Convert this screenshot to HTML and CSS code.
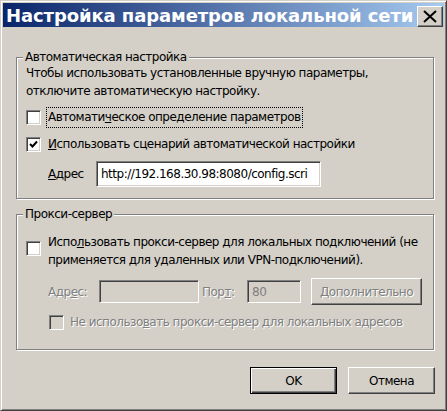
FILE: index.html
```html
<!DOCTYPE html>
<html lang="ru">
<head>
<meta charset="utf-8">
<title>Настройка параметров локальной сети</title>
<link rel="stylesheet" href="styles.css">
</head>
<body>
<div class="window">
  <div class="titlebar">
    <span class="title">Настройка параметров локальной сети</span>
    <span class="close">
      <svg width="14" height="13" viewBox="0 0 14 13"><path d="M1 1 L13 12 M13 1 L1 12" stroke="#000" stroke-width="2" fill="none"/></svg>
    </span>
  </div>
  <div class="content">
    <div class="group g1">
      <div class="group-title">Автоматическая настройка</div>
      <p class="note">Чтобы использовать установленные вручную параметры,<br>отключите автоматическую настройку.</p>
      <div class="check-row r1">
        <span class="cb"></span>
        <span class="lbl focus">Автомати<u>ч</u>еское определение параметров</span>
      </div>
      <div class="check-row r2">
        <span class="cb"><svg width="9" height="9" viewBox="0 0 9 9"><path d="M1 4 L3.5 6.5 L8 1.5" stroke="#000" stroke-width="2" fill="none"/></svg></span>
        <span class="lbl"><u>И</u>спользовать сценарий автоматической настройки</span>
      </div>
      <div class="addr-row">
        <span class="addr-lbl"><u>А</u>дрес</span>
        <span class="input url">http://192.168.30.98:8080/config.scri</span>
      </div>
    </div>
    <div class="group g2">
      <div class="group-title">Прокси-сервер</div>
      <div class="check-row r3">
        <span class="cb"></span>
        <span class="lbl two">Испо<u>л</u>ьзовать прокси-сервер для локальных подключений (не<br>применяется для удаленных или VPN-подключений).</span>
      </div>
      <div class="proxy-row">
        <span class="dis p-addr-lbl">Адр<u>е</u>с:</span>
        <span class="input disabled p-addr"></span>
        <span class="dis p-port-lbl">Пор<u>т</u>:</span>
        <span class="input disabled p-port"><span class="dis-val">80</span></span>
        <span class="btn adv"><span class="dis"><u>Д</u>ополнительно</span></span>
      </div>
      <div class="check-row r4">
        <span class="cb disabled-cb"></span>
        <span class="dis lbl-dis">Не использо<u>в</u>ать прокси-сервер для локальных адресов</span>
      </div>
    </div>
    <div class="buttons">
      <span class="btn default">OK</span>
      <span class="btn">Отмена</span>
    </div>
  </div>
</div>
</body>
</html>
```
FILE: styles.css
```css
* { box-sizing: border-box; }
html, body { margin: 0; padding: 0; }
body {
  width: 447px;
  height: 411px;
  overflow: hidden;
  background: #d4d0c8;
  font-family: "DejaVu Sans", sans-serif;
  font-size: 12px;
  letter-spacing: -0.5px;
  color: #000;
}
u { text-decoration: underline; text-underline-offset: 1px; }

.window {
  width: 447px;
  height: 411px;
  background: #d4d0c8;
  border: 1px solid;
  border-color: #d4d0c8 #404040 #404040 #d4d0c8;
  box-shadow: inset 1px 1px #fff, inset -1px -1px #808080;
  padding: 2px;
  display: flex;
  flex-direction: column;
}

.titlebar {
  height: 24px;
  display: flex;
  align-items: center;
  padding-left: 3px;
  background: linear-gradient(to right, #0a246a, #a6caf0);
}
.title {
  flex: 1;
  color: #fff;
  font-weight: bold;
  font-size: 18px;
  letter-spacing: -0.1px;
  white-space: nowrap;
  overflow: hidden;
}
.close {
  width: 26px;
  height: 21px;
  margin-right: 1px;
  margin-top: 2px;
  background: #d4d0c8;
  border: 1px solid;
  border-color: #fff #404040 #404040 #fff;
  box-shadow: inset -1px -1px #808080;
  display: flex;
  align-items: center;
  justify-content: center;
}

.content {
  display: flex;
  flex-direction: column;
  padding: 0 9px 0 13px;
}

.group {
  border: 1px solid #808080;
  box-shadow: inset 1px 1px #fff, 1px 1px #fff;
  margin-right: 1px;
  padding: 0 9px;
  display: flex;
  flex-direction: column;
}
.g1 { margin-top: 30px; padding-bottom: 11px; }
.g2 { margin-top: 15px; padding-bottom: 19px; }

.group-title {
  margin-top: -8px;
  margin-left: -3px;
  line-height: 14px;
  height: 14px;
  padding: 0 2px;
  background: #d4d0c8;
  align-self: flex-start;
  white-space: nowrap;
}

.note {
  margin: 0;
  line-height: 18px;
  white-space: nowrap;
}

.check-row {
  display: flex;
  align-items: center;
}
.r1 { margin-top: 6px; height: 22px; }
.r2 { margin-top: 5px; height: 22px; }
.r3 { margin-top: 11px; align-items: flex-start; }
.r4 { margin-top: 10px; height: 15px; padding-left: 23px; }

.cb {
  width: 15px;
  height: 15px;
  flex: none;
  background: #fff;
  border: 1px solid;
  border-color: #808080 #fff #fff #808080;
  box-shadow: inset 1px 1px #404040, inset -1px -1px #d4d0c8;
  display: flex;
  align-items: center;
  justify-content: center;
}
.r3 .cb { margin-top: 9px; }
.disabled-cb { background: #d4d0c8; }

.lbl {
  margin-left: 5px;
  padding: 0 1px;
  line-height: 18px;
  border: 1px solid transparent;
  white-space: nowrap;
}
.lbl.focus { border: 1px dotted #000; line-height: 19px; }
.lbl.two { line-height: 18px; }

.addr-row {
  margin-top: 6px;
  display: flex;
  align-items: center;
}
.addr-lbl { margin-left: 22px; width: 48px; }

.input {
  display: flex;
  align-items: center;
  background: #fff;
  border: 1px solid;
  border-color: #808080 #fff #fff #808080;
  box-shadow: inset 1px 1px #404040, inset -1px -1px #d4d0c8;
  white-space: nowrap;
  overflow: hidden;
}
.url { width: 225px; height: 26px; padding-left: 4px; }
.input.disabled { background: #d4d0c8; height: 23px; }

.proxy-row {
  margin-top: 8px;
  height: 27px;
  display: flex;
  align-items: center;
}
.dis { color: #808080; text-shadow: 1px 1px 0 #fff; white-space: nowrap; }
.p-addr-lbl { margin-left: 22px; width: 51px; }
.p-addr { width: 100px; }
.p-port-lbl { margin-left: 3px; width: 45px; }
.p-port { width: 54px; padding-left: 4px; }
.dis-val { color: #808080; }
.lbl-dis { margin-left: 6px; line-height: 15px; }

.btn {
  display: flex;
  align-items: center;
  justify-content: center;
  width: 87px;
  height: 27px;
  flex: none;
  background: #d4d0c8;
  border: 1px solid;
  border-color: #fff #404040 #404040 #fff;
  box-shadow: inset -1px -1px #808080;
  white-space: nowrap;
}
.btn.adv { margin-left: 10px; width: 111px; }
.btn.default {
  border: 1px solid #000;
  box-shadow: inset 1px 1px #fff, inset -1px -1px #404040, inset -2px -2px #808080;
}

.buttons {
  margin-top: 17px;
  display: flex;
  justify-content: flex-end;
  gap: 11px;
}
```
